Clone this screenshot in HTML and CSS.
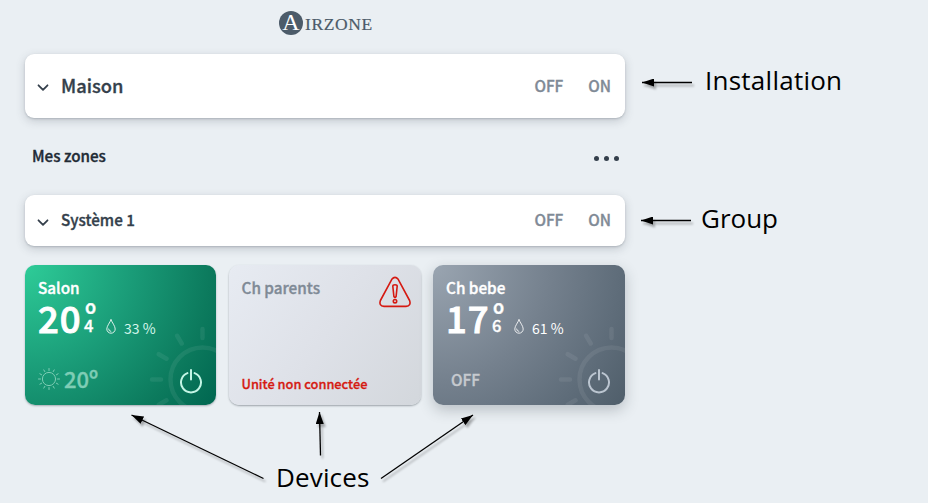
FILE: index.html
```html
<!DOCTYPE html>
<html lang="fr">
<head>
<meta charset="utf-8">
<title>Airzone</title>
<link rel="stylesheet" href="styles.css">
</head>
<body>
<svg class="defs" width="0" height="0" aria-hidden="true">
  <symbol id="chevron" viewBox="0 0 12 8"><path d="M1.500 1.300 6 5.800 10.500 1.300" fill="none" stroke="currentColor" stroke-width="1.800" stroke-linecap="round" stroke-linejoin="round"/></symbol>
  <symbol id="drop" viewBox="0 0 10 15"><path d="M5 .8C4 3.500.8 7 .8 10a4.200 4.200 0 0 0 8.400 0C9.200 7 6 3.500 5 .8Z M2.600 10a2.500 2.500 0 0 0 2.200 2.400" fill="none" stroke="currentColor" stroke-width=".85" stroke-linecap="round"/></symbol>
  <symbol id="power" viewBox="0 0 24 26"><path d="M8.400 5.100a10 10 0 1 0 7.200 0M12 2v9.500" fill="none" stroke="currentColor" stroke-width="2" stroke-linecap="round"/></symbol>
  <symbol id="big-sun" viewBox="0 0 68 80"><g fill="none" stroke="currentColor" stroke-width="4.500" stroke-linecap="round"><circle cx="54.500" cy="54.500" r="32"/><path d="M54.500 4v9M29.200 10.800l4.500 7.700M10.800 29.200l7.700 4.500M4 54.500h9M10.800 79.800l7.700-4.500"/></g></symbol>
</svg>
<main class="app">
  <header class="brand">
    <span class="brand-mark">A</span><span class="brand-name">IRZONE</span>
  </header>

  <section class="bar bar-installation">
    <svg class="chevron"><use href="#chevron"/></svg>
    <h1 class="bar-title">Maison</h1>
    <span class="switch off">OFF</span><span class="switch on">ON</span>
  </section>

  <div class="zones-head">
    <h2 class="zones-title">Mes zones</h2>
    <span class="dots"><i></i><i></i><i></i></span>
  </div>

  <section class="bar bar-group">
    <svg class="chevron"><use href="#chevron"/></svg>
    <h3 class="bar-title">Système 1</h3>
    <span class="switch off">OFF</span><span class="switch on">ON</span>
  </section>

  <section class="devices">
    <article class="card card-on">
      <svg class="big-sun"><use href="#big-sun"/></svg>
      <h4 class="name">Salon</h4>
      <div class="reading">
        <span class="temp">20</span>
        <span class="fraction"><span class="degree">º</span><span class="tenth">4</span></span>
        <svg class="drop"><use href="#drop"/></svg>
        <span class="humidity">33 %</span>
      </div>
      <div class="foot">
        <svg class="mode" viewBox="0 0 22 22"><g fill="none" stroke="currentColor" stroke-width="1" stroke-linecap="round"><circle cx="11" cy="11" r="6.600"/><path d="M11 .5v2M11 19.500v2M.5 11h2M19.500 11h2M5.800 1.900l1 1.700M15.200 18.400l1 1.700M1.900 5.800l1.700 1M18.400 15.200l1.700 1M1.900 16.200l1.700-1M18.400 6.800l1.700-1M5.800 20.100l1-1.700M15.200 3.600l1-1.700"/></g></svg>
        <span class="target">20º</span>
        <svg class="power"><use href="#power"/></svg>
      </div>
    </article>

    <article class="card card-error">
      <div class="error-head">
        <h4 class="name">Ch parents</h4>
        <svg class="warning" viewBox="0 0 32 32"><g fill="none" stroke="currentColor" stroke-width="1.600" stroke-linejoin="round"><path d="M12.800 3.300Q16-.6 19.200 3.300L30.600 24.500Q32.400 29.800 27 30.400H5Q-.4 29.800 1.400 24.500Z"/><path d="M13.800 10.200Q13.800 8.700 16 8.700T18.200 10.200L17.100 20.500Q16 22.200 14.900 20.500Z"/><circle cx="16" cy="25.200" r="1.700"/></g></svg>
      </div>
      <p class="error-text">Unité non connectée</p>
    </article>

    <article class="card card-off">
      <svg class="big-sun"><use href="#big-sun"/></svg>
      <h4 class="name">Ch bebe</h4>
      <div class="reading">
        <span class="temp">17</span>
        <span class="fraction"><span class="degree">º</span><span class="tenth">6</span></span>
        <svg class="drop"><use href="#drop"/></svg>
        <span class="humidity">61 %</span>
      </div>
      <div class="foot">
        <span class="state">OFF</span>
        <svg class="power"><use href="#power"/></svg>
      </div>
    </article>
  </section>
</main>

<svg class="arrows" width="928" height="503" viewBox="0 0 928 503" aria-hidden="true">
  <defs>
    <marker id="head" viewBox="0 0 12 8" refX="12" refY="4" markerWidth="12" markerHeight="8" markerUnits="userSpaceOnUse" orient="auto"><path d="M12 4 0 0V8Z"/></marker>
  </defs>
  <g stroke="#000" stroke-width="1.300">
    <path d="M692 82.500H642" marker-end="url(#head)"/>
    <path d="M691 220.500H641" marker-end="url(#head)"/>
    <path d="M263.500 478.500 131.500 415" marker-end="url(#head)"/>
    <path d="M320.500 455.500 319.500 412" marker-end="url(#head)"/>
    <path d="M381 478.500 473 415" marker-end="url(#head)"/>
  </g>
</svg>
<span class="note note-installation">Installation</span>
<span class="note note-group">Group</span>
<span class="note note-devices">Devices</span>
</body>
</html>
```

FILE: styles.css
```css
* { box-sizing: border-box; margin: 0; padding: 0; }

body {
  position: relative;
  width: 928px;
  height: 503px;
  overflow: hidden;
  background: #eaeff3;
  color: #343f4b;
  font-family: "Noto Sans CJK SC", "Noto Sans", sans-serif;
}

svg { display: block; flex: none; }
.defs { position: absolute; }

.app { width: 600px; margin-left: 25px; }

.brand {
  display: flex;
  align-items: center;
  height: 54px;
  padding: 0 0 8px 254px;
  color: #4c5b69;
  font-family: "Liberation Serif", serif;
}
.brand-mark {
  width: 24px;
  height: 24px;
  border-radius: 50%;
  background: #4c5b69;
  color: #fff;
  font-size: 24px;
  line-height: 22px;
  text-align: center;
}
.brand-name { margin: 1px 0 0 2px; font-size: 17.500px; line-height: 20px; letter-spacing: .6px; -webkit-text-stroke: .2px currentColor; }

.bar {
  display: flex;
  align-items: center;
  padding: 0 14px 0 12px;
  border-radius: 9px;
  background: #fff;
  box-shadow: 0 3px 10px rgba(60, 70, 80, .22), 0 1px 2px rgba(60, 70, 80, .22);
}
.bar-installation { height: 64px; }
.bar-group { height: 51px; }
.chevron { width: 12px; height: 8px; margin-top: 4px; }
.bar-title, .zones-title, .switch, .name, .temp, .degree, .tenth, .target, .state, .error-text {
  font-weight: 500;
  -webkit-text-stroke: .35px currentColor;
}
.bar-title { flex: 1; margin: -2px 0 0 12px; }
.bar-installation .bar-title { font-size: 18.300px; line-height: 28px; }
.bar-group .bar-title { margin-top: -3px; font-size: 15.200px; line-height: 24px; }
.switch { margin-top: -2px; color: #7f8a96; font-size: 15.300px; line-height: 24px; }
.bar-group .switch { margin-top: -3px; }
.off { margin-right: 25px; }

.zones-head {
  display: flex;
  align-items: center;
  justify-content: space-between;
  height: 77px;
  padding: 0 6px 0 7px;
}
.zones-title { margin-top: -3px; color: #222b35; font-size: 15.200px; line-height: 24px; }
.dots { display: flex; gap: 5px; margin-top: 3px; }
.dots i { width: 5px; height: 5px; border-radius: 50%; background: #343f4b; }

.devices {
  display: grid;
  grid-template-columns: 191px 192px 192px;
  column-gap: 12.500px;
  margin-top: 19px;
}
.card {
  position: relative;
  display: flex;
  flex-direction: column;
  height: 140px;
  padding: 12px 13px 13px;
  border-radius: 10px;
  overflow: hidden;
  color: #fff;
}
.card-on { background: radial-gradient(circle at 0 0, #2ecc98 0, #1a9c78 45%, #0c7a5d 78%, #006650 100%); box-shadow: 0 1px 2px rgba(40, 50, 60, .35); }
.card-error { background: linear-gradient(125deg, #e7ebf2, #dee1e8 50%, #d3d7dc); box-shadow: 0 1px 2px rgba(40, 50, 60, .4); }
.card-off { background: radial-gradient(circle at 0 0, #9aa5b1 0, #74808d 50%, #5f6d7a 78%, #4f5e6a 100%); box-shadow: 0 5px 14px rgba(40, 50, 60, .25); }

.big-sun { position: absolute; right: 0; bottom: 0; width: 68px; height: 80px; color: rgba(255, 255, 255, .07); }
.name { font-size: 15.300px; line-height: 20px; }

.reading { display: flex; height: 42px; }
.temp { width: 46px; font-size: 36.500px; line-height: 41px; letter-spacing: 1px; -webkit-text-stroke-width: .9px; }
.fraction { display: flex; flex-direction: column; width: 22px; }
.degree { height: 19px; margin-left: 1px; font-size: 27px; line-height: 33px; }
.tenth { font-size: 16.500px; line-height: 18px; }
.drop { width: 10px; height: 15px; margin-top: 22px; }
.humidity { margin: 21px 0 0 8px; font-size: 14px; line-height: 21px; }
.card-on .humidity { color: #d5f7ec; }

.foot { display: flex; align-items: center; margin-top: auto; height: 28px; }
.mode { width: 22px; height: 22px; margin-top: 2px; color: #7fcdb5; }
.target { margin: -1px 0 0 4px; color: #7fcdb5; font-size: 22px; line-height: 28px; }
.state { margin: 2px 0 0 5px; color: #c6cacf; font-size: 15.300px; line-height: 28px; }
.power { width: 24px; height: 26px; margin: 5px 0 0 auto; color: #c3f5e5; }
.card-off .power { margin-right: 1px; color: #bbc5d0; }

.error-head { display: flex; justify-content: space-between; }
.card-error { color: #7f8a96; }
.warning { width: 32px; height: 32px; margin: -1px -3px 0 0; color: #d51a12; }
.error-text { margin-top: auto; color: #d51a12; font-size: 12.800px; line-height: 16px; -webkit-text-stroke-width: .3px; }

.arrows { position: absolute; left: 0; top: 0; filter: drop-shadow(2px 3px 1px rgba(0, 0, 0, .3)); }
.note { position: absolute; color: #000; font-family: "Open Sans", sans-serif; font-size: 26px; line-height: 36px; white-space: nowrap; }
.note-installation { left: 705px; top: 62px; letter-spacing: .25px; }
.note-group { left: 701px; top: 200px; }
.note-devices { left: 276px; top: 459px; letter-spacing: .15px; }
```
